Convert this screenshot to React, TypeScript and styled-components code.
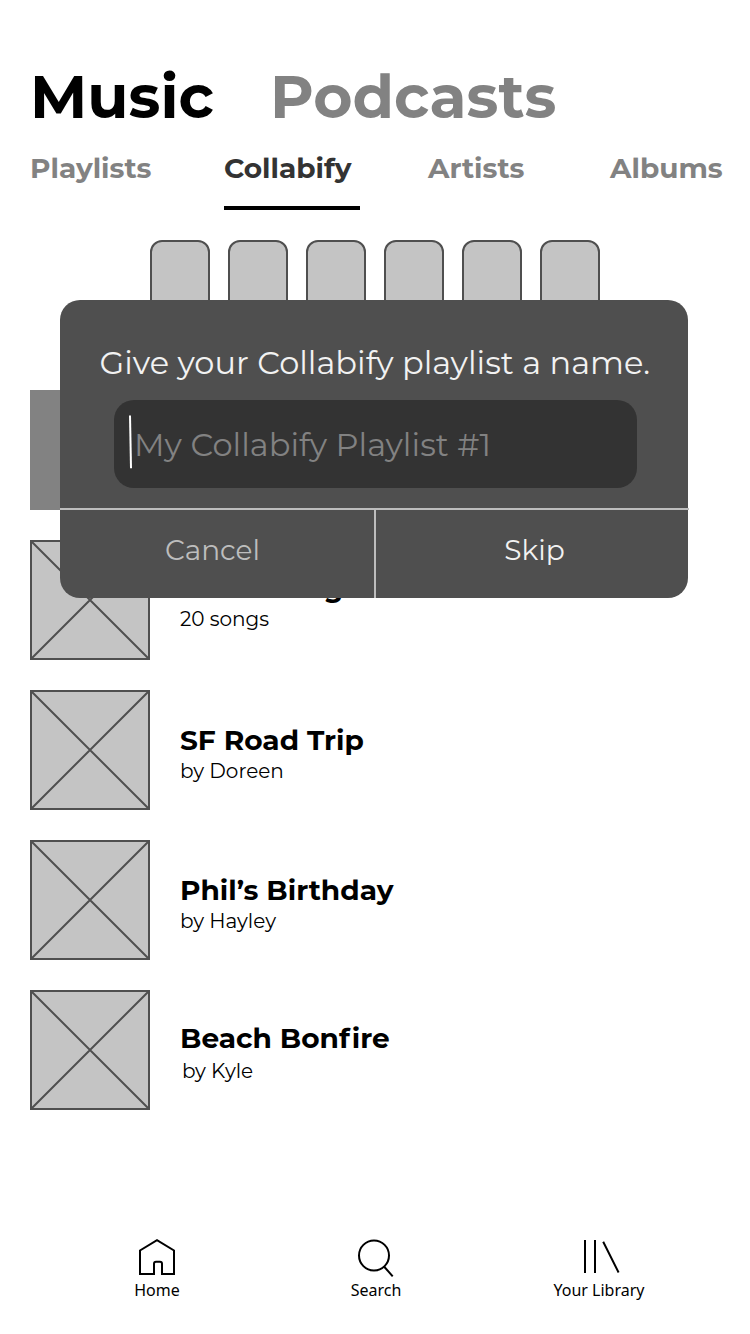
import React from 'react';
import styled, { createGlobalStyle } from 'styled-components';

const color = {
  black: '#000000',
  ink: '#333333',
  panel: '#4f4f4f',
  muted: '#828282',
  rule: '#bdbdbd',
  fill: '#c4c4c4',
  light: '#f2f2f2',
};

const GlobalStyle = createGlobalStyle`
  * { box-sizing: border-box; }
  body { margin: 0; background: #fff; }
  button { border: 0; background: none; padding: 0; }
`;

const Screen = styled.div`
  position: relative;
  display: flex;
  flex-direction: column;
  width: 750px;
  height: 1334px;
  overflow: hidden;
  background: #fff;
  font-family: Montserrat, Inter, 'Liberation Sans', sans-serif;
  font-variant-ligatures: none;
  white-space: nowrap;
`;

const Headings = styled.header`
  display: grid;
  grid-template-columns: 240px auto;
  padding: 60px 0 0 30px;
`;

const Heading = styled.h1<{ $active?: boolean }>`
  margin: 0;
  font-size: 60px;
  line-height: 73px;
  font-weight: 700;
  color: ${(p) => (p.$active ? color.black : color.muted)};
`;

const Tabs = styled.nav`
  display: grid;
  grid-template-columns: 194px 204px 182px auto;
  margin-top: 18px;
  padding-left: 30px;
`;

const Tab = styled.div<{ $active?: boolean }>`
  width: 136px;
  height: 59px;
  border-bottom: 4px solid ${(p) => (p.$active ? color.black : 'transparent')};
  font-size: 28px;
  line-height: 34px;
  font-weight: 700;
  color: ${(p) => (p.$active ? color.ink : color.muted)};
`;

const Slots = styled.div`
  display: flex;
  gap: 18px;
  margin-top: 30px;
  padding-left: 150px;
`;

const Slot = styled.div`
  width: 60px;
  height: 120px;
  border: 2px solid ${color.panel};
  border-radius: 12px;
  background: ${color.fill};
`;

const List = styled.main`
  display: flex;
  flex-direction: column;
  gap: 30px;
  margin-top: 30px;
  padding-left: 30px;
`;

const CreateTile = styled.div`
  width: 120px;
  height: 120px;
  background: ${color.muted};
`;

const Row = styled.article`
  display: flex;
  gap: 30px;
  height: 120px;
`;

const Cover = styled.svg`
  display: block;
  width: 120px;
  height: 120px;
  fill: ${color.fill};
  stroke: ${color.panel};
  stroke-width: 2;
`;

const RowText = styled.div<{ $top: number; $gap: number }>`
  display: flex;
  flex-direction: column;
  gap: ${(p) => p.$gap}px;
  padding-top: ${(p) => p.$top}px;
`;

const RowTitle = styled.h2`
  margin: 0;
  font-size: 28px;
  line-height: 34px;
  font-weight: 700;
  color: ${color.black};
`;

/* Opens up the tight f–i pair. */
const Loose = styled.span`
  letter-spacing: 2px;
`;

const RowMeta = styled.p<{ $indent?: number; $track?: number }>`
  margin: 0;
  padding-left: ${(p) => p.$indent ?? 0}px;
  font-size: 20px;
  line-height: 24px;
  letter-spacing: ${(p) => p.$track ?? 0}px;
  color: ${color.black};
`;

const BottomNav = styled.nav`
  display: grid;
  grid-template-columns: 219px 223px auto;
  margin-top: 128px;
  padding-left: 97px;
  font-family: 'Noto Sans', sans-serif;
`;

const NavItem = styled.div`
  display: flex;
  flex-direction: column;
  align-items: center;
  gap: 1px;
  width: 120px;
  font-size: 16px;
  line-height: 22px;
  color: ${color.black};
`;

const NavIcon = styled.svg`
  width: 40px;
  height: 40px;
  overflow: visible;
  fill: none;
  stroke: ${color.black};
  stroke-width: 2;
`;

const Dialog = styled.section`
  position: absolute;
  left: 60px;
  top: 300px;
  display: flex;
  flex-direction: column;
  width: 628px;
  height: 298px;
  padding-top: 43px;
  border-radius: 20px;
  background: ${color.panel};
`;

const DialogTitle = styled.h3`
  margin: 0 0 18.4px;
  padding-left: 39.5px;
  font-size: 32px;
  line-height: 39px;
  font-weight: 400;
  letter-spacing: 0.01px;
  color: ${color.light};
`;

const NameField = styled.div`
  display: flex;
  align-items: center;
  width: 523px;
  height: 88px;
  margin-left: 54.2px;
  padding-left: 15px;
  border-radius: 20px;
  background: ${color.ink};
`;

const Caret = styled.svg`
  width: 4px;
  height: 54px;
  margin: 0 0.8px 5px 0;
  stroke: #fff;
  stroke-width: 2;
`;

const Placeholder = styled.span`
  font-size: 32px;
  line-height: 39px;
  letter-spacing: 0.04px;
  color: ${color.muted};
`;

const Actions = styled.div`
  display: grid;
  grid-template-columns: 316px auto;
  width: 629px;
  height: 90px;
  margin-top: auto;
  border-top: 2px solid ${color.rule};
`;

const Action = styled.button<{ $primary?: boolean; $inset: number }>`
  padding: 0 0 8px ${(p) => p.$inset}px;
  border-right: ${(p) => (p.$primary ? 'none' : `2px solid ${color.rule}`)};
  font-family: inherit;
  font-size: 28px;
  line-height: 34px;
  text-align: left;
  color: ${(p) => (p.$primary ? color.light : color.rule)};
`;

const playlists = [
  { id: 'liked', title: 'Liked Songs', meta: '20 songs', top: 31, gap: 2 },
  { id: 'trip', title: 'SF Road Trip', meta: 'by Doreen', top: 33, gap: 2 },
  { id: 'birthday', title: 'Phil’s Birthday', meta: 'by Hayley', top: 33, gap: 2 },
  {
    id: 'bonfire',
    title: <>Beach Bon<Loose>f</Loose>ire</>,
    meta: 'by Kyle',
    track: -0.15,
    top: 31,
    gap: 4,
    indent: 2,
  },
];

export default function App() {
  return (
    <Screen>
      <GlobalStyle />
      <Headings>
        <Heading $active>Music</Heading>
        <Heading>Podcasts</Heading>
      </Headings>
      <Tabs>
        <Tab>Playlists</Tab>
        <Tab $active>Collabify</Tab>
        <Tab>Artists</Tab>
        <Tab>Albums</Tab>
      </Tabs>
      <Slots>
        {[0, 1, 2, 3, 4, 5].map((n) => (
          <Slot key={n} />
        ))}
      </Slots>
      <List>
        <CreateTile />
        {playlists.map((p) => (
          <Row key={p.id}>
            <Cover viewBox="0 0 120 120">
              <rect x="1" y="1" width="118" height="118" />
              <path d="M1.5 1.5L118.5 118.5M118.5 1.5L1.5 118.5" />
            </Cover>
            <RowText $top={p.top} $gap={p.gap}>
              <RowTitle>{p.title}</RowTitle>
              <RowMeta $indent={p.indent} $track={p.track}>{p.meta}</RowMeta>
            </RowText>
          </Row>
        ))}
      </List>
      <BottomNav>
        <NavItem>
          <NavIcon viewBox="0 0 40 40">
            <path d="M3 36V12.5L20 2.2L37 12.5V36H25V25.7Q25 23.7 23 23.7H19Q17 23.7 17 25.7V36Z" />
          </NavIcon>
          Home
        </NavItem>
        <NavItem>
          <NavIcon viewBox="0 0 40 40">
            <circle cx="18" cy="17.5" r="15" />
            <path d="M28 28.5L36.7 38.3" />
          </NavIcon>
          Search
        </NavItem>
        <NavItem>
          <NavIcon viewBox="0 0 40 40">
            <path d="M6 2V35M16 2V35M24.2 3.7L39.6 34.5" />
          </NavIcon>
          Your Library
        </NavItem>
      </BottomNav>
      <Dialog>
        <DialogTitle>Give your Collabify playlist a name.</DialogTitle>
        <NameField>
          <Caret viewBox="0 0 4 54">
            <path d="M1 .5L2 53.2" />
          </Caret>
          <Placeholder>My Collabify Playlist #1</Placeholder>
        </NameField>
        <Actions>
          <Action $inset={105}>Cancel</Action>
          <Action $primary $inset={128.3}>Skip</Action>
        </Actions>
      </Dialog>
    </Screen>
  );
}
